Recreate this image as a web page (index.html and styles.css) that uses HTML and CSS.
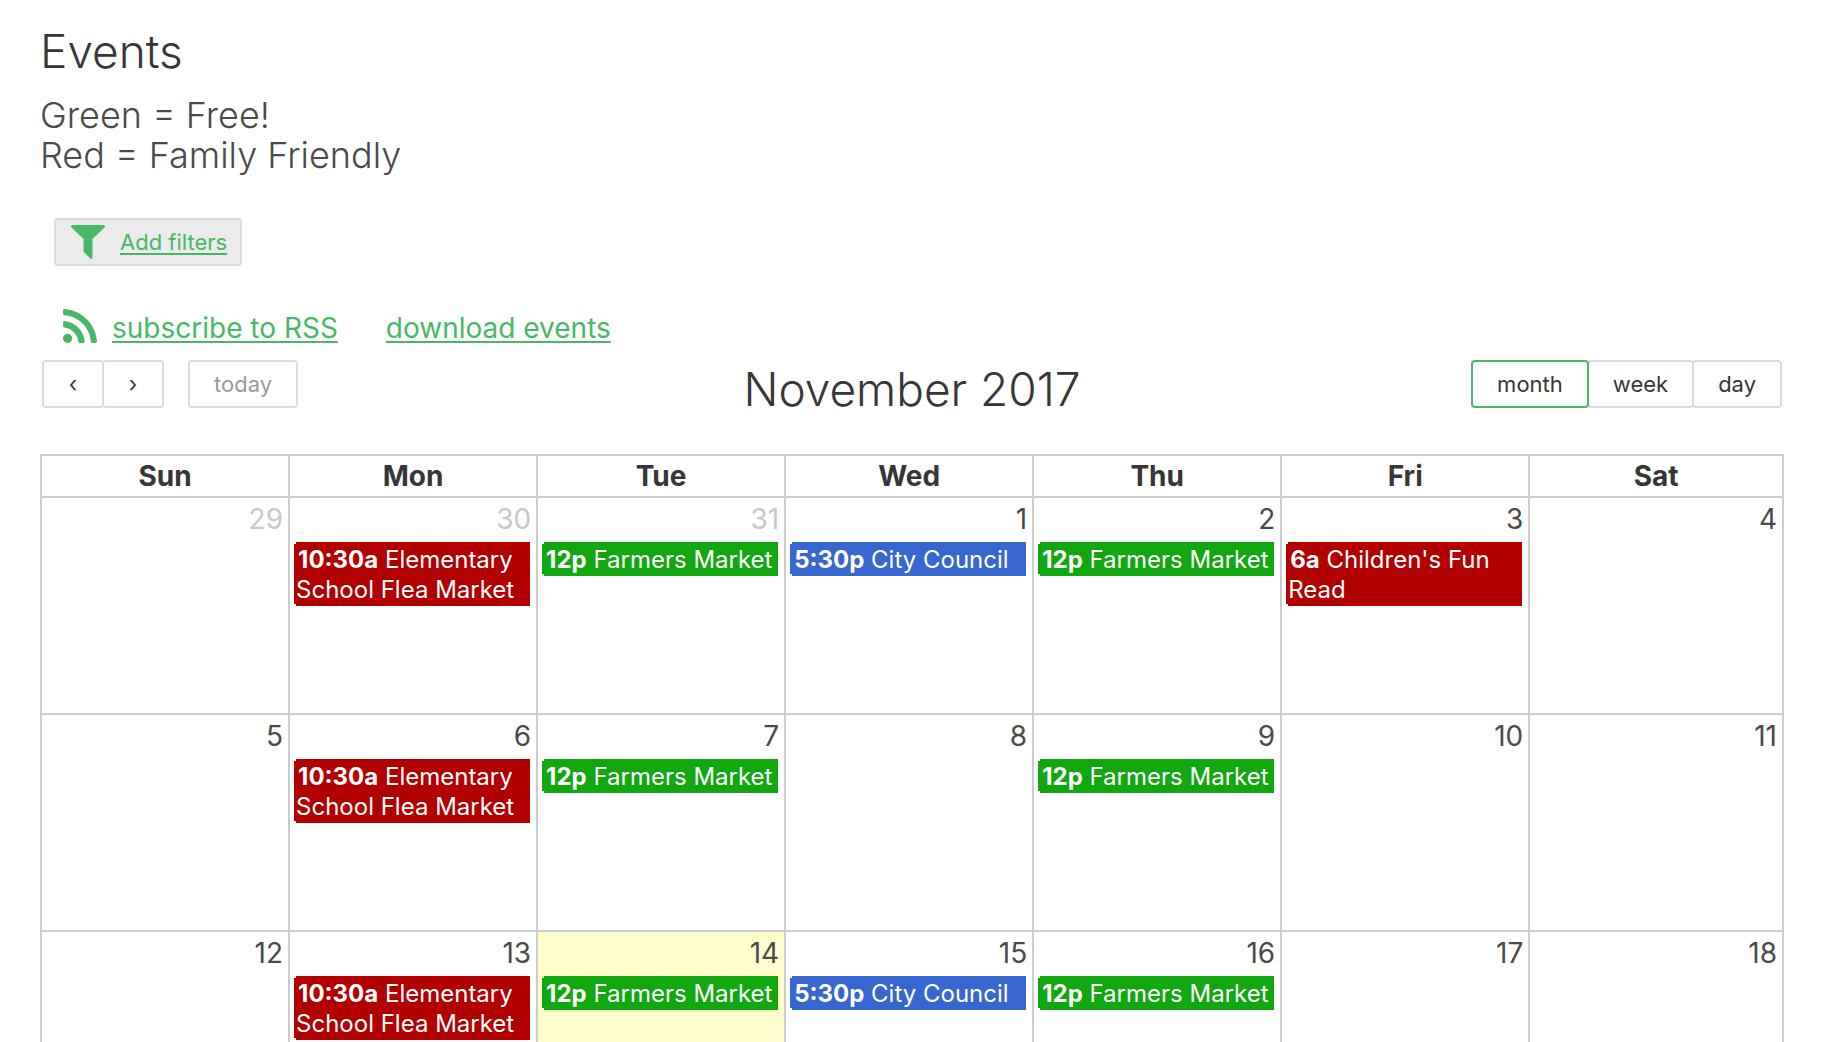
FILE: index.html
```html
<!DOCTYPE html>
<html lang="en">
    <head>
        <meta charset="UTF-8" />
        <meta name="viewport" content="width=device-width, initial-scale=1.0" />
        <title>Events</title>
        <link rel="stylesheet" href="styles.css">
    </head>
    <body>
        <h1>Events</h1>
        <p class="legend">Green = Free!<br>Red = Family Friendly</p>
        <a class="filters" href="#filters">
            <svg class="icon" viewBox="0 0 34 34" aria-hidden="true">
                <path d="M1.5 0h31c1.4 0 1.9 1.5 1 2.5L21.5 14v18.6c0 1.3-1.2 1.8-2.2.9l-6-6c-.5-.5-.8-1-.8-1.7V14L.5 2.5C-.4 1.5.1 0 1.5 0z" />
            </svg>
            <span class="link">Add filters</span>
        </a>
        <div class="feeds">
            <a class="feed" href="#rss">
                <svg class="icon" viewBox="0 0 34 34" aria-hidden="true">
                    <circle cx="4.6" cy="29.3" r="4.6" />
                    <path d="M1.3 0C18 .8 33 15 34 32.5c0 .9-.6 1.5-1.4 1.5h-3.3c-.8 0-1.400-.5-1.400-1.300C27 18.500 15.500 7 1.300 6.200.500 6.200 0 5.500 0 4.800V1.400C0 .5.500 0 1.300 0z" />
                    <path d="M1.400 12C12 12.700 20.700 21.500 21.700 32.500c0 .9-.5 1.500-1.400 1.500H17c-.8 0-1.400-.5-1.500-1.300C14.600 25.300 8.800 19.300 1.300 18.400.500 18.300 0 17.700 0 17v-3.500c0-.9.600-1.500 1.400-1.500z" />
                </svg>
                <span class="link">subscribe to RSS</span>
            </a>
            <a class="link" href="#download">download events</a>
        </div>
        <div class="toolbar">
            <div class="side">
                <div class="group">
                    <button type="button" aria-label="Previous">‹</button>
                    <button type="button" aria-label="Next">›</button>
                </div>
                <button type="button" disabled>today</button>
            </div>
            <h2>November 2017</h2>
            <div class="side right">
                <div class="group">
                    <button type="button" class="active">month</button>
                    <button type="button">week</button>
                    <button type="button">day</button>
                </div>
            </div>
        </div>
        <table>
            <thead>
                <tr>
                    <th>Sun</th>
                    <th>Mon</th>
                    <th>Tue</th>
                    <th>Wed</th>
                    <th>Thu</th>
                    <th>Fri</th>
                    <th class="last">Sat</th>
                </tr>
            </thead>
            <tbody>
                <tr>
                    <td class="other"><div class="day">29</div></td>
                    <td class="other">
                        <div class="day">30</div>
                        <a class="event red" href="#event"><b>10:30a</b> Elementary School Flea Market</a>
                    </td>
                    <td class="other">
                        <div class="day">31</div>
                        <a class="event green" href="#event"><b>12p</b> Farmers Market</a>
                    </td>
                    <td>
                        <div class="day">1</div>
                        <a class="event blue" href="#event"><b>5:30p</b> City Council</a>
                    </td>
                    <td>
                        <div class="day">2</div>
                        <a class="event green" href="#event"><b>12p</b> Farmers Market</a>
                    </td>
                    <td>
                        <div class="day">3</div>
                        <a class="event red" href="#event"><b>6a</b> Children's Fun Read</a>
                    </td>
                    <td><div class="day">4</div></td>
                </tr>
                <tr>
                    <td><div class="day">5</div></td>
                    <td>
                        <div class="day">6</div>
                        <a class="event red" href="#event"><b>10:30a</b> Elementary School Flea Market</a>
                    </td>
                    <td>
                        <div class="day">7</div>
                        <a class="event green" href="#event"><b>12p</b> Farmers Market</a>
                    </td>
                    <td><div class="day">8</div></td>
                    <td>
                        <div class="day">9</div>
                        <a class="event green" href="#event"><b>12p</b> Farmers Market</a>
                    </td>
                    <td><div class="day">10</div></td>
                    <td><div class="day">11</div></td>
                </tr>
                <tr>
                    <td><div class="day">12</div></td>
                    <td>
                        <div class="day">13</div>
                        <a class="event red" href="#event"><b>10:30a</b> Elementary School Flea Market</a>
                    </td>
                    <td class="today">
                        <div class="day">14</div>
                        <a class="event green" href="#event"><b>12p</b> Farmers Market</a>
                    </td>
                    <td>
                        <div class="day">15</div>
                        <a class="event blue" href="#event"><b>5:30p</b> City Council</a>
                    </td>
                    <td>
                        <div class="day">16</div>
                        <a class="event green" href="#event"><b>12p</b> Farmers Market</a>
                    </td>
                    <td><div class="day">17</div></td>
                    <td><div class="day">18</div></td>
                </tr>
            </tbody>
        </table>
    </body>
</html>
```
FILE: styles.css
```css
html {
    height: 100%;
    overflow: hidden;
}
body {
    margin: 0;
    padding: 22px 40px;
    background: #fff;
    color: #4a4a4a;
    font-family: Inter, "Liberation Sans", sans-serif;
    font-size: 28px;
    line-height: 34px;
}
h1,
h2 {
    margin: 0;
    color: #363636;
    font-size: 46px;
    font-weight: 300;
    line-height: 58px;
}
.legend {
    margin: 15px 0 43px;
    font-size: 36px;
    font-weight: 300;
    line-height: 40px;
}
a {
    color: #48b868;
    text-decoration: none;
}
.link {
    text-decoration: underline;
    text-decoration-thickness: 2px;
    text-underline-offset: 3px;
    text-decoration-skip-ink: none;
}
.icon {
    width: 34px;
    height: 34px;
    fill: #48b868;
}
.filters {
    display: flex;
    align-items: center;
    gap: 15px;
    box-sizing: border-box;
    width: fit-content;
    height: 48px;
    margin-left: 14px;
    padding: 0 13px 0 15px;
    background: #ebebeb;
    border: 2px solid #dbdbdb;
    border-radius: 4px;
    font-size: 22px;
}
.feeds {
    display: flex;
    align-items: flex-end;
    gap: 48px;
    margin: 43px 0 15px 23px;
}
.feed {
    display: flex;
    align-items: flex-end;
    gap: 15px;
}
.feed .icon {
    padding-bottom: 2px;
}
.toolbar {
    display: flex;
    align-items: flex-start;
    margin: 0 2px 36px;
}
.side {
    display: flex;
    flex: 1;
    gap: 24px;
}
.right {
    justify-content: flex-end;
}
.group {
    display: flex;
}
button {
    box-sizing: border-box;
    height: 48px;
    padding: 0 24px;
    background: #fff;
    border: 2px solid #dbdbdb;
    border-radius: 4px;
    color: #363636;
    font-family: inherit;
    font-size: 22px;
}
.group button {
    min-width: 62px;
}
.group button + button {
    margin-left: -2px;
}
button:disabled {
    color: #9b9b9b;
}
button.active {
    z-index: 1;
    border-color: #48b868;
}
table {
    width: 100%;
    border-collapse: collapse;
    table-layout: fixed;
}
th,
td {
    width: 14.24%;
    padding: 0;
    border: 2px solid #ccc;
    vertical-align: top;
}
.last {
    width: auto;
}
th {
    height: 40px;
    padding: 3px 0;
    box-sizing: border-box;
    color: #363636;
    font-weight: 700;
}
td {
    height: 215px;
}
.day {
    padding: 4px 5px 6px;
    text-align: right;
}
.other .day {
    color: #c8c8c8;
}
.today {
    background: #fffdcc;
}
/* the strip on the left is shorter than the bar itself */
.event {
    display: block;
    margin: 0 6px;
    padding: 3px 0 1px;
    color: #fff;
    font-size: 24px;
    line-height: 30px;
}
.event b {
    padding-left: 2px;
}
.red {
    background: #b20000;
    box-shadow: -4px 0 0 -2px #b20000;
}
.green {
    background: #10a80e;
    box-shadow: -4px 0 0 -2px #10a80e;
}
.blue {
    background: #3666cf;
    box-shadow: -4px 0 0 -2px #3666cf;
}
```
